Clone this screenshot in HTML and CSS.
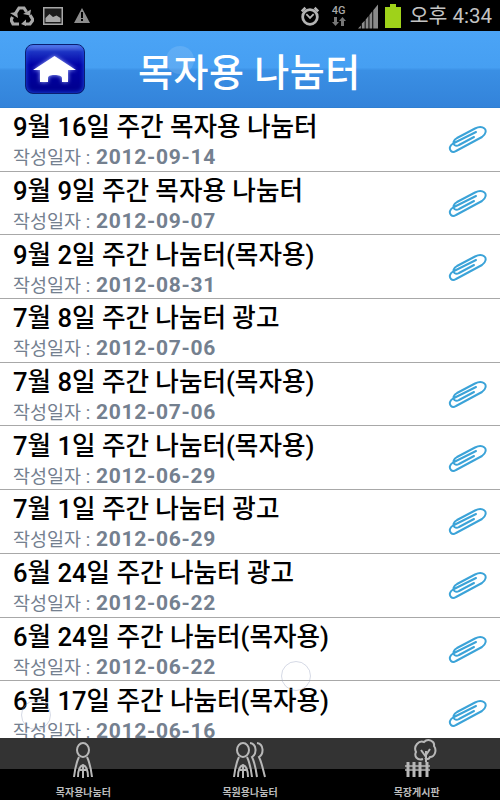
FILE: index.html
```html
<!DOCTYPE html>
<html lang="ko">
<head>
  <meta charset="UTF-8">
  <title>목자용 나눔터</title>
  <link rel="stylesheet" href="styles.css">
</head>
<body>
  <svg class="defs" width="0" height="0">
    <defs>
      <symbol id="clip" viewBox="0 0 40 28">
        <path d="M29 6 L6 17.500 C2.500 19.500 2 23 4 25 C5.500 26.500 7.500 26 9 25 L35 11 C39 8.500 39.500 4 37.500 2.500 C35 0.500 31 1 28 2.500 L10 12 C6.500 14 5.500 17 7.500 19 C9 20.200 10.500 20 12 19 L27 11" fill="none" stroke="#3ba3d8" stroke-width="2" stroke-linecap="round" stroke-linejoin="round"/>
      </symbol>
    </defs>
  </svg>

  <div class="status">
    <div class="status-left">
      <svg width="24" height="20" viewBox="0 0 24 20" fill="none" stroke="#a8a8a8" stroke-width="3.200">
        <path d="M4.500 9 L9 2 H14 L16.500 6"/>
        <path d="M20 9 L23 14 L20 18 H15"/>
        <path d="M9 18 H3 L1 14 L2.500 11"/>
        <path d="M13 8 L20 9.500 L21 3.500 Z M16 13.500 L11 18 L16 20 Z M0 7 L7 6 L8 12 Z" fill="#a8a8a8" stroke="none"/>
      </svg>
      <svg width="20" height="18" viewBox="0 0 20 18">
        <rect x="0.750" y="0.750" width="18.500" height="16.500" fill="#1c1c1c" stroke="#a8a8a8" stroke-width="1.500"/>
        <path d="M2.500 15 V11 L6.500 7 L10 10 L13.500 8.500 L17.500 11 V15 Z" fill="#a8a8a8"/>
      </svg>
      <svg class="warn" width="16" height="15" viewBox="0 0 16 15">
        <path d="M8 0 L16 15 H0 Z" fill="#8c8c8c"/>
        <rect x="7" y="4" width="2" height="6" fill="#000"/>
        <rect x="7" y="11" width="2" height="2" fill="#000"/>
      </svg>
    </div>
    <div class="status-right">
      <svg width="22" height="22" viewBox="0 0 24 24">
        <circle cx="12" cy="13" r="8" fill="none" stroke="#b4b4b4" stroke-width="3"/>
        <path d="M2 6 L6 2 L8 4 L4 8 Z M22 6 L18 2 L16 4 L20 8 Z" fill="#b4b4b4"/>
        <path d="M8 10 L12 14 L16 10" fill="none" stroke="#b4b4b4" stroke-width="2"/>
      </svg>
      <div class="net">
        <span>4G</span>
        <svg width="14" height="9" viewBox="0 0 14 9" fill="#777">
          <path d="M2 0 H5 V5 H7 L3.500 9 L0 5 H2 Z M9 9 H12 V4 H14 L10.500 0 L7 4 H9 Z"/>
        </svg>
      </div>
      <svg class="signal" width="20" height="26" viewBox="0 0 21 26" fill="#8a8a8a">
        <path d="M0 26 L3 23 V26 Z M4 26 V21 L7 18 V26 Z M8 26 V17 L11 13 V26 Z M12 26 V12 L15 8 V26 Z M16 26 V7 L21 1 V26 Z"/>
      </svg>
      <svg width="16" height="24" viewBox="0 0 16 24">
        <rect x="5" y="0" width="6" height="3" fill="#9fd21a"/>
        <rect x="0" y="3" width="16" height="21" fill="#9fd21a"/>
      </svg>
      <span class="clock">오후 4:34</span>
    </div>
  </div>

  <div class="header">
    <div class="home">
      <svg class="home-icon" width="44" height="27" viewBox="0 0 44 27">
        <path d="M21.500 0 L43 14 H35 V26 H29 V22 C29 20 26 19 21.500 19 C17 19 15 20 15 22 V26 H7 V14 H0 Z" fill="#fff"/>
      </svg>
    </div>
    <h1>목자용 나눔터</h1>
  </div>

  <div class="list">
    <div class="row">
      <div class="row-text"><div class="title">9월 16일 주간 목자용 나눔터</div><div class="date"><span>작성일자 :</span> 2012-09-14</div></div>
      <svg class="clip"><use href="#clip"/></svg>
    </div>
    <div class="row">
      <div class="row-text"><div class="title">9월 9일 주간 목자용 나눔터</div><div class="date"><span>작성일자 :</span> 2012-09-07</div></div>
      <svg class="clip"><use href="#clip"/></svg>
    </div>
    <div class="row">
      <div class="row-text"><div class="title">9월 2일 주간 나눔터(목자용)</div><div class="date"><span>작성일자 :</span> 2012-08-31</div></div>
      <svg class="clip"><use href="#clip"/></svg>
    </div>
    <div class="row">
      <div class="row-text"><div class="title">7월 8일 주간 나눔터 광고</div><div class="date"><span>작성일자 :</span> 2012-07-06</div></div>
    </div>
    <div class="row">
      <div class="row-text"><div class="title">7월 8일 주간 나눔터(목자용)</div><div class="date"><span>작성일자 :</span> 2012-07-06</div></div>
      <svg class="clip"><use href="#clip"/></svg>
    </div>
    <div class="row">
      <div class="row-text"><div class="title">7월 1일 주간 나눔터(목자용)</div><div class="date"><span>작성일자 :</span> 2012-06-29</div></div>
      <svg class="clip"><use href="#clip"/></svg>
    </div>
    <div class="row">
      <div class="row-text"><div class="title">7월 1일 주간 나눔터 광고</div><div class="date"><span>작성일자 :</span> 2012-06-29</div></div>
      <svg class="clip"><use href="#clip"/></svg>
    </div>
    <div class="row">
      <div class="row-text"><div class="title">6월 24일 주간 나눔터 광고</div><div class="date"><span>작성일자 :</span> 2012-06-22</div></div>
      <svg class="clip"><use href="#clip"/></svg>
    </div>
    <div class="row">
      <div class="row-text"><div class="title">6월 24일 주간 나눔터(목자용)</div><div class="date"><span>작성일자 :</span> 2012-06-22</div></div>
      <svg class="clip"><use href="#clip"/></svg>
    </div>
    <div class="row">
      <div class="row-text"><div class="title">6월 17일 주간 나눔터(목자용)</div><div class="date"><span>작성일자 :</span> 2012-06-16</div></div>
      <svg class="clip"><use href="#clip"/></svg>
    </div>
  </div>

  <div class="tabs">
    <div class="tab">
      <svg width="40" height="40" viewBox="0 0 40 40" fill="none" stroke="#b8b8b8" stroke-width="2">
        <ellipse cx="20" cy="12" rx="6" ry="7"/>
        <path d="M11 39 C12 31 13 25 16 19 M29 39 C28 31 27 25 24 19"/>
        <path d="M15 39 C15 33 17 28 20 27 C23 28 25 33 25 39"/>
        <path d="M20 27 V40 M17 32 H23"/>
      </svg>
      <span>목자용나눔터</span>
    </div>
    <div class="tab">
      <svg width="40" height="40" viewBox="0 0 40 40" fill="none" stroke="#b8b8b8" stroke-width="2">
        <ellipse cx="13" cy="12" rx="6" ry="7"/>
        <path d="M4 39 C5 31 6 25 9 19 M22 39 C21 31 20 25 17 19"/>
        <path d="M8 39 C8 33 10 28 13 27 C16 28 18 33 18 39"/>
        <path d="M13 27 V40 M10 32 H16"/>
        <path d="M20 5 C27 6 27 16 22 19 C25 25 26 32 27 39"/>
        <path d="M27 5 C34 6 34 16 29 19 C32 25 33 32 35 39"/>
      </svg>
      <span>목원용나눔터</span>
    </div>
    <div class="tab">
      <svg width="40" height="40" viewBox="0 0 40 40" fill="none" stroke="#b8b8b8" stroke-width="2">
        <path d="M26 21 C20 23 17 18 19 14 C16 8 22 2 27 4 C31 0 38 3 37 8 C40 12 38 19 33 19 C32 21 30 22 28 20"/>
        <path d="M29 24 V13 M29 19 L24 12 M29 17 L33 11"/>
        <path d="M11 39 V24 M17 39 V24 M23 39 V24 M30 39 V24" stroke-width="3"/>
        <path d="M8 28 H33 M8 32 H33" stroke-width="1.500"/>
      </svg>
      <span>목장게시판</span>
    </div>
  </div>

  <div class="ripple r1"></div>
  <div class="ripple r2"></div>
  <div class="ripple r3"></div>
</body>
</html>
```

FILE: styles.css
```css
html, body {
  margin: 0;
  padding: 0;
}

body {
  width: 500px;
  height: 800px;
  overflow: hidden;
  display: flex;
  flex-direction: column;
  position: relative;
  background: #fff;
  font-family: "Roboto", "Noto Sans CJK KR", sans-serif;
}

.defs {
  position: absolute;
}

.status {
  height: 31px;
  flex: none;
  background: #000;
  display: flex;
  justify-content: space-between;
  align-items: center;
  padding: 0 8px 0 10px;
}

.status-left, .status-right {
  display: flex;
  align-items: center;
}

.status-left {
  gap: 9px;
}

.status-left .warn {
  margin-left: 2px;
}

.status-right {
  gap: 7px;
}

.net {
  display: flex;
  flex-direction: column;
  align-items: center;
  margin: 0 5px 0 4px;
  color: #a8a8a8;
  font-size: 11px;
  font-weight: 500;
  line-height: 12px;
}

.clock {
  margin-left: 2px;
  color: #c4c4c4;
  font-size: 20.500px;
  line-height: 24px;
}

.header {
  height: 77px;
  flex: none;
  display: flex;
  align-items: center;
  background: linear-gradient(#4ba4f6 0%, #469ff2 48%, #3a8fe4 52%, #3383da 100%);
  box-sizing: border-box;
  border-bottom: 1px solid #2f7fd2;
  padding-left: 25px;
}

.home {
  width: 60px;
  height: 50px;
  flex: none;
  display: flex;
  align-items: center;
  justify-content: center;
  box-sizing: border-box;
  border: 1px solid #0a1f70;
  border-radius: 8px;
  background: linear-gradient(#6f8ff0 0%, #1c34c4 14%, #0000a6 42%, #00008c 100%);
  box-shadow: inset 0 0 5px #1f55e6;
}

.home-icon {
  margin-top: 1px;
  filter: drop-shadow(0 0 2px #a8b8ff);
}

.header h1 {
  margin: 0 0 0 53px;
  color: #fff;
  font-size: 38px;
  font-weight: 500;
  letter-spacing: 0.500px;
}

.list {
  flex: 1;
  overflow: hidden;
}

.row {
  height: 63.700px;
  box-sizing: border-box;
  border-bottom: 1px solid #a8a8a8;
  display: flex;
  justify-content: space-between;
  align-items: center;
  padding: 0 13px 0 13px;
}

.row-text {
  min-width: 0;
  padding-top: 4px;
}

.title {
  color: #000;
  font-size: 25.600px;
  font-weight: 500;
  line-height: 34px;
}

.date {
  color: #74808f;
  font-size: 21px;
  font-weight: 700;
  line-height: 27px;
  letter-spacing: 0.700px;
}

.date span {
  font-size: 18.500px;
  font-weight: 400;
  letter-spacing: 0;
}

.clip {
  width: 40px;
  height: 28px;
  flex: none;
  margin-top: 2px;
}

.tabs {
  height: 62px;
  flex: none;
  display: flex;
  background: linear-gradient(#333 0%, #333 50%, #000 50%, #000 100%);
}

.tab {
  flex: 1;
  display: flex;
  flex-direction: column;
  align-items: center;
  gap: 8px;
  color: #bdbdbd;
  font-size: 10px;
  font-weight: 700;
  line-height: 14px;
}

.ripple {
  position: absolute;
  width: 28px;
  height: 28px;
  border: 1px solid rgba(150, 160, 190, 0.4);
  border-radius: 50%;
}

.r1 {
  left: 21px;
  top: 700px;
}

.r2 {
  left: 281px;
  top: 661px;
}

.r3 {
  left: 166px;
  top: 46px;
  background: rgba(255, 255, 255, 0.12);
  border: none;
}
```
